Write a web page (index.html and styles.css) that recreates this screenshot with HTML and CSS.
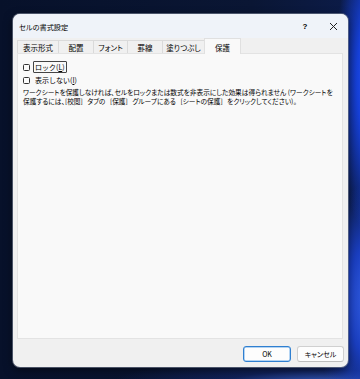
FILE: index.html
```html
<!DOCTYPE html>
<html lang="ja">
<head>
<meta charset="utf-8">
<link rel="stylesheet" href="styles.css">
</head>
<body>
<div class="desktop">
  <div class="dialog">
    <div class="titlebar">
      <span class="title">セルの書式設定</span>
      <span class="help">?</span>
      <span class="close"><svg width="9" height="9" viewBox="0 0 9 9"><path d="M1 1 L8 8 M8 1 L1 8" stroke="#222" stroke-width="1" fill="none"/></svg></span>
    </div>
    <div class="tabs">
      <div class="tab t1">表示形式</div>
      <div class="tab t2">配置</div>
      <div class="tab t3">フォント</div>
      <div class="tab t4">罫線</div>
      <div class="tab t5">塗りつぶし</div>
      <div class="tab active">保護</div>
    </div>
    <div class="panel">
      <div class="check first"><span class="box"></span><span class="label focus">ロック(<u>L</u>)</span></div>
      <div class="check"><span class="box"></span><span class="label">表示しない(<u>I</u>)</span></div>
      <p class="note">ワークシートを保護しなければ、セルをロックまたは数式を非表示にした効果は得られません (ワークシートを<br><span class="wide">保護するには、[校閲] タブの [保護] グループにある [シートの保護] をクリックしてください)。</span></p>
    </div>
    <div class="footer">
      <button class="btn ok">OK</button>
      <button class="btn">キャンセル</button>
    </div>
  </div>
</div>
</body>
</html>
```
FILE: styles.css
```css
html, body {
  margin: 0;
  padding: 0;
}
body {
  width: 360px;
  height: 379px;
  overflow: hidden;
  font-family: "Noto Sans CJK JP", "Noto Sans", sans-serif;
}
.desktop {
  width: 360px;
  height: 379px;
  padding: 14px 0 0 13px;
  box-sizing: border-box;
  background:
    radial-gradient(ellipse 40px 160px at 375px 80px, #2a5cff 0%, #1640d8 45%, rgba(10,30,120,0) 100%),
    radial-gradient(ellipse 70px 120px at 380px 300px, #3d6cf0 0%, #1a3ec0 50%, rgba(10,30,120,0) 100%),
    radial-gradient(ellipse 220px 30px at 330px 385px, #3a62c8 0%, rgba(20,40,110,0.6) 50%, rgba(10,20,60,0) 100%),
    linear-gradient(90deg, #07112a 0%, #0a1634 70%, #0c1c4a 100%);
}
.dialog {
  width: 335px;
  height: 353px;
  background: #f0f0f0;
  border-radius: 7px;
  box-shadow: 0 0 0 1px rgba(120,130,150,0.6), 0 3px 10px rgba(0,0,0,0.5);
  display: flex;
  flex-direction: column;
  overflow: hidden;
  font-size: 7px;
  color: #000;
}
.titlebar {
  height: 24px;
  background: #eff3f9;
  display: flex;
  align-items: center;
  padding-left: 6px;
  box-sizing: border-box;
  font-feature-settings: "palt";
}
.title {
  font-size: 7.2px;
  flex: 1;
  padding-top: 1px;
}
.help {
  font-family: "Liberation Sans", sans-serif;
  font-size: 8px;
  font-weight: bold;
  width: 10px;
  text-align: center;
  margin-right: 19px;
}
.close {
  width: 9px;
  height: 9px;
  margin-right: 10px;
  display: flex;
}
.tabs {
  display: flex;
  height: 15px;
  margin-left: 4px;
  align-items: flex-end;
  font-size: 7.5px;
  font-feature-settings: "palt";
}
.tab {
  height: 13px;
  box-sizing: border-box;
  border: 1px solid #dadada;
  border-bottom: none;
  border-right: none;
  background: #f0f0f0;
  display: flex;
  align-items: center;
  justify-content: center;
  padding-top: 1px;
}
.t1 { width: 41px; }
.t2 { width: 35px; }
.t3 { width: 34px; }
.t4 { width: 35px; }
.t5 { width: 42px; }
.tab.active {
  width: 37px;
  height: 16px;
  background: #f9f9f9;
  border: 1px solid #e0e0e0;
  border-bottom: none;
  margin-bottom: -1px;
  position: relative;
  z-index: 1;
}
.panel {
  margin-left: 4px;
  width: 326px;
  height: 286px;
  box-sizing: border-box;
  background: #f9f9f9;
  border: 1px solid #e3e3e3;
  padding: 7px 0 0 5px;
}
.check {
  display: flex;
  align-items: center;
  height: 12px;
  margin-bottom: 1px;
}
.box {
  width: 7px;
  height: 7px;
  border: 1px solid #333;
  border-radius: 1.5px;
  background: #fbfbfb;
  margin-right: 3px;
  box-sizing: border-box;
  flex: none;
}
.label {
  line-height: 10px;
  padding: 0 1px;
  border: 1px solid transparent;
}
.label.focus {
  border: 1px solid #444;
  border-radius: 1px;
}
.label u {
  text-decoration-thickness: 0.6px;
  text-underline-offset: 1px;
}
.note {
  margin: 2px 0 0 0;
  line-height: 9px;
  font-size: 6.7px;
  white-space: nowrap;
  font-feature-settings: "palt";
}
.wide {
  word-spacing: 3px;
}
.footer {
  display: flex;
  justify-content: flex-end;
  gap: 6px;
  padding: 7px 4px 0 0;
}
.btn {
  font-family: "Noto Sans CJK JP", "Noto Sans", sans-serif;
  font-feature-settings: "palt";
  font-size: 7px;
  width: 47px;
  height: 16px;
  padding: 0;
  background: #fdfdfd;
  border: 1px solid #d0d0d0;
  border-bottom-color: #bdbdbd;
  border-radius: 3px;
  color: #000;
}
.btn.ok {
  width: 48px;
  border: 1px solid #2f7fd0;
  box-shadow: inset 0 0 0 0.5px #6aaae8;
}
```
